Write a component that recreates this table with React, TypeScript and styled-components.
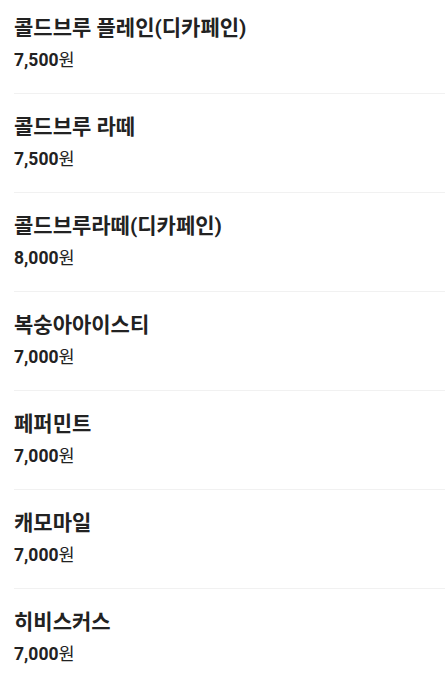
import React from "react";
import styled, { createGlobalStyle } from "styled-components";

interface MenuItem {
  name: string;
  price: string;
}

const menu: MenuItem[] = [
  { name: "콜드브루 플레인(디카페인)", price: "7,500" },
  { name: "콜드브루 라떼", price: "7,500" },
  { name: "콜드브루라떼(디카페인)", price: "8,000" },
  { name: "복숭아아이스티", price: "7,000" },
  { name: "페퍼민트", price: "7,000" },
  { name: "캐모마일", price: "7,000" },
  { name: "히비스커스", price: "7,000" }
];

const GlobalStyle = createGlobalStyle`
  body {
    margin: 0;
    background: #fff;
    font-family: Roboto, "Noto Sans CJK KR", sans-serif;
    color: #222;
  }
`;

const ListStyled = styled.ul`
  list-style: none;
  margin: 0;
  padding: 0 0 0 14px;
`;

const ItemStyled = styled.li`
  display: flex;
  flex-direction: column;
  gap: 6px;
  padding: 19px 0 21px;
  border-bottom: 1px solid #f1f1f1;

  &:first-child {
    padding-top: 14px;
  }
`;

const NameStyled = styled.div`
  font-size: 21px;
  font-weight: 700;
  line-height: 28px;
  color: #222;
`;

const PriceStyled = styled.div`
  font-size: 17.5px;
  line-height: 24px;
  color: #222;
`;

const AmountStyled = styled.span`
  font-weight: 700;
`;

const App = () => (
  <>
    <GlobalStyle />
    <ListStyled>
      {menu.map((item) => (
        <ItemStyled key={item.name}>
          <NameStyled>{item.name}</NameStyled>
          <PriceStyled>
            <AmountStyled>{item.price}</AmountStyled>원
          </PriceStyled>
        </ItemStyled>
      ))}
    </ListStyled>
  </>
);

export default App;
